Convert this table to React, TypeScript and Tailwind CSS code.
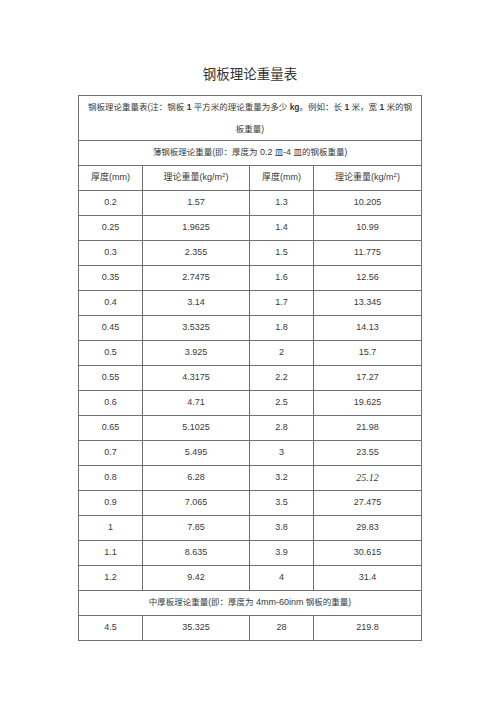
import React from 'react';

const rows: [string, string, string, string][] = [
  ['0.2', '1.57', '1.3', '10.205'],
  ['0.25', '1.9625', '1.4', '10.99'],
  ['0.3', '2.355', '1.5', '11.775'],
  ['0.35', '2.7475', '1.6', '12.56'],
  ['0.4', '3.14', '1.7', '13.345'],
  ['0.45', '3.5325', '1.8', '14.13'],
  ['0.5', '3.925', '2', '15.7'],
  ['0.55', '4.3175', '2.2', '17.27'],
  ['0.6', '4.71', '2.5', '19.625'],
  ['0.65', '5.1025', '2.8', '21.98'],
  ['0.7', '5.495', '3', '23.55'],
  ['0.8', '6.28', '3.2', '25.12'],
  ['0.9', '7.065', '3.5', '27.475'],
  ['1', '7.85', '3.8', '29.83'],
  ['1.1', '8.635', '3.9', '30.615'],
  ['1.2', '9.42', '4', '31.4'],
];

const cell = 'border border-[#707070] text-center align-middle p-0';

const Unit = () => (
  <>
    理论重量(kg/m<sup className="text-[6px]">2</sup>)
  </>
);

export default function App() {
  return (
    <div className="w-[500px] min-h-[707px] bg-white text-[#3a3a3a] font-['Liberation_Sans','Noto_Sans_CJK_SC',sans-serif]">
      <div className="pt-[66px] pb-[11px] text-center text-[13.5px] leading-[18px] text-[#333] font-['Liberation_Serif','Noto_Sans_CJK_SC',serif]">
        钢板理论重量表
      </div>
      <table className="mx-auto w-[343px] table-fixed border-collapse text-[9px]">
        <colgroup>
          <col className="w-[64px]" />
          <col className="w-[107px]" />
          <col className="w-[64px]" />
          <col className="w-[108px]" />
        </colgroup>
        <tbody>
          <tr className="h-[45px]">
            <td colSpan={4} className={cell + ' px-[4px] text-[8.5px] leading-[22px]'}>
              <span className="whitespace-nowrap">
                钢板理论重量表(注：钢板 <b>1</b> 平方米的理论重量为多少 <b>kg</b>。例如：长 <b>1</b> 米，宽 <b>1</b> 米的钢
              </span>
              <br />
              板重量)
            </td>
          </tr>
          <tr className="h-[25px]">
            <td colSpan={4} className={cell + ' text-[8.5px]'}>
              薄钢板理论重量(即：厚度为 <span className="text-[9px]">0.2</span> 皿-<span className="text-[9px]">4</span> 皿的钢板重量)
            </td>
          </tr>
          <tr className="h-[25px]">
            <td className={cell}>厚度(mm)</td>
            <td className={cell}><Unit /></td>
            <td className={cell}>厚度(mm)</td>
            <td className={cell}><Unit /></td>
          </tr>
          {rows.map((r) => (
            <tr key={r[0]} className="h-[25px]">
              <td className={cell}>{r[0]}</td>
              <td className={cell}>{r[1]}</td>
              <td className={cell}>{r[2]}</td>
              <td className={cell}>
                {r[3] === '25.12' ? (
                  <span className="italic text-[10px] font-['Liberation_Serif',serif]">{r[3]}</span>
                ) : (
                  r[3]
                )}
              </td>
            </tr>
          ))}
          <tr className="h-[25px]">
            <td colSpan={4} className={cell + ' text-[8.5px]'}>
              中厚板理论重量(即：厚度为 <span className="text-[9px]">4mm-60inm</span> 钢板的重量)
            </td>
          </tr>
          <tr className="h-[25px]">
            <td className={cell}>4.5</td>
            <td className={cell}>35.325</td>
            <td className={cell}>28</td>
            <td className={cell}>219.8</td>
          </tr>
        </tbody>
      </table>
    </div>
  );
}
